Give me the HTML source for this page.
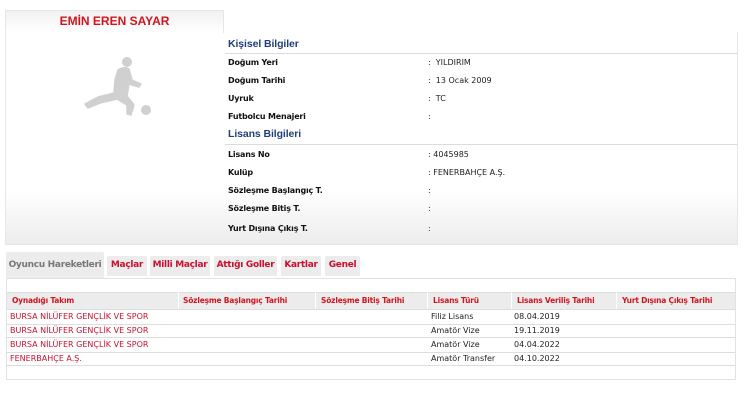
<!DOCTYPE html>
<html><head><meta charset="utf-8"><style>
*{margin:0;padding:0;box-sizing:border-box}
body{width:750px;height:402px;background:#fff;font-family:Verdana,"DejaVu Sans","Liberation Sans",sans-serif;position:relative;overflow:hidden}
.a{position:absolute;white-space:nowrap}
.top{position:absolute;left:5px;top:32px;width:733px;height:213px;border:1px solid #e6e6e6;border-top:none;background:linear-gradient(#fff 0,#fff 75%,#ececec 100%)}
.tab0{position:absolute;left:5px;top:10px;width:219px;height:23px;border:1px solid #e6e6e6;border-bottom:none;background:linear-gradient(#f1f1f1,#fff);}
.name{left:5px;top:14px;width:219px;text-align:center;color:#d2141e;font:bold 12px "Liberation Sans",Arial,sans-serif}
.h{color:#203f7c;font:bold 10.5px "Liberation Sans",Arial,sans-serif;letter-spacing:-0.1px}
.ln{position:absolute;left:225px;width:513px;height:1px;background:#dcdcdc}
.l{left:228px;font-weight:bold;font-size:8px;color:#111;letter-spacing:-0.2px}
.v{left:428px;font-size:8px;color:#222}
.tab{position:absolute;top:256px;height:20px;background:#ececec;border-radius:2px 2px 0 0;font-weight:bold;font-size:9px;color:#c8102e;padding-top:4px;text-align:center;letter-spacing:-0.3px}
.box{position:absolute;left:6px;top:278px;width:730px;height:102px;border:1px solid #e2e2e2}
.th{position:absolute;left:7px;top:292px;width:728px;height:17px;background:#ececec;border-top:1px solid #ddd}
.hc{top:296px;font-weight:bold;font-size:7.5px;color:#d2141e;letter-spacing:-0.2px}
.sep{position:absolute;top:292px;width:1px;height:17px;background:#fff}
.r{position:absolute;left:7px;width:728px;height:1px;background:#ddd}
.c{font-size:8px;color:#c8102e;left:10px}
.d{font-size:8px;color:#222}
</style></head><body>
<div class="top"></div>
<div class="tab0"></div>
<div class="a name">EMİN EREN SAYAR</div>
<svg class="a" style="left:60px;top:50px" width="110" height="80" viewBox="60 50 110 80">
<g fill="#d0d0d0" stroke="#d0d0d0" stroke-linecap="round" stroke-linejoin="round">
<circle cx="127" cy="62" r="5" stroke="none"/>
<path d="M118 70 Q124 66 129 69 L132 80 L141 84 L139 87 L129 84 L127 96 L134 105 L131 115 L127 114 L127 105 L117 99 L100 103 L88 108 L85 104 L98 97 L114 93 L115 80 Z" stroke-width="1.5"/>
<circle cx="146" cy="110" r="5" stroke="none"/>
</g></svg>
<div class="a h" style="left:228px;top:38px">Kişisel Bilgiler</div>
<div class="ln" style="top:53px"></div>
<div class="a l" style="top:58px">Doğum Yeri</div><div class="a v" style="top:58px">:&nbsp; YILDIRIM</div>
<div class="a l" style="top:76px">Doğum Tarihi</div><div class="a v" style="top:76px">:&nbsp; 13 Ocak 2009</div>
<div class="a l" style="top:94px">Uyruk</div><div class="a v" style="top:94px">:&nbsp; TC</div>
<div class="a l" style="top:112px">Futbolcu Menajeri</div><div class="a v" style="top:112px">:</div>
<div class="a h" style="left:228px;top:128px">Lisans Bilgileri</div>
<div class="ln" style="top:144px"></div>
<div class="a l" style="top:150px">Lisans No</div><div class="a v" style="top:150px">: 4045985</div>
<div class="a l" style="top:168px">Kulüp</div><div class="a v" style="top:168px">: FENERBAHÇE A.Ş.</div>
<div class="a l" style="top:186px">Sözleşme Başlangıç T.</div><div class="a v" style="top:186px">:</div>
<div class="a l" style="top:204px">Sözleşme Bitiş T.</div><div class="a v" style="top:204px">:</div>
<div class="a l" style="top:224px">Yurt Dışına Çıkış T.</div><div class="a v" style="top:224px">:</div>

<div class="tab" style="left:6px;width:98px;top:252px;height:26px;padding-top:8px;color:#777">Oyuncu Hareketleri</div>
<div class="tab" style="left:107px;width:40px">Maçlar</div>
<div class="tab" style="left:150px;width:60px">Milli Maçlar</div>
<div class="tab" style="left:214px;width:63px">Attığı Goller</div>
<div class="tab" style="left:281px;width:40px">Kartlar</div>
<div class="tab" style="left:325px;width:35px">Genel</div>

<div class="box"></div>
<div class="th"></div>
<div class="sep" style="left:178px"></div><div class="sep" style="left:315px"></div><div class="sep" style="left:427px"></div><div class="sep" style="left:511px"></div><div class="sep" style="left:616px"></div>
<div class="a hc" style="left:12px">Oynadığı Takım</div>
<div class="a hc" style="left:183px">Sözleşme Başlangıç Tarihi</div>
<div class="a hc" style="left:321px">Sözleşme Bitiş Tarihi</div>
<div class="a hc" style="left:433px">Lisans Türü</div>
<div class="a hc" style="left:517px">Lisans Veriliş Tarihi</div>
<div class="a hc" style="left:622px">Yurt Dışına Çıkış Tarihi</div>
<div class="r" style="top:309px"></div>
<div class="a c" style="top:312px">BURSA NİLÜFER GENÇLİK VE SPOR</div><div class="a d" style="left:431px;top:312px">Filiz Lisans</div><div class="a d" style="left:514px;top:312px">08.04.2019</div>
<div class="r" style="top:324px"></div>
<div class="a c" style="top:326px">BURSA NİLÜFER GENÇLİK VE SPOR</div><div class="a d" style="left:431px;top:326px">Amatör Vize</div><div class="a d" style="left:514px;top:326px">19.11.2019</div>
<div class="r" style="top:337px"></div>
<div class="a c" style="top:340px">BURSA NİLÜFER GENÇLİK VE SPOR</div><div class="a d" style="left:431px;top:340px">Amatör Vize</div><div class="a d" style="left:514px;top:340px">04.04.2022</div>
<div class="r" style="top:352px"></div>
<div class="a c" style="top:354px">FENERBAHÇE A.Ş.</div><div class="a d" style="left:431px;top:354px">Amatör Transfer</div><div class="a d" style="left:514px;top:354px">04.10.2022</div>
<div class="r" style="top:365px"></div>
</body></html>
